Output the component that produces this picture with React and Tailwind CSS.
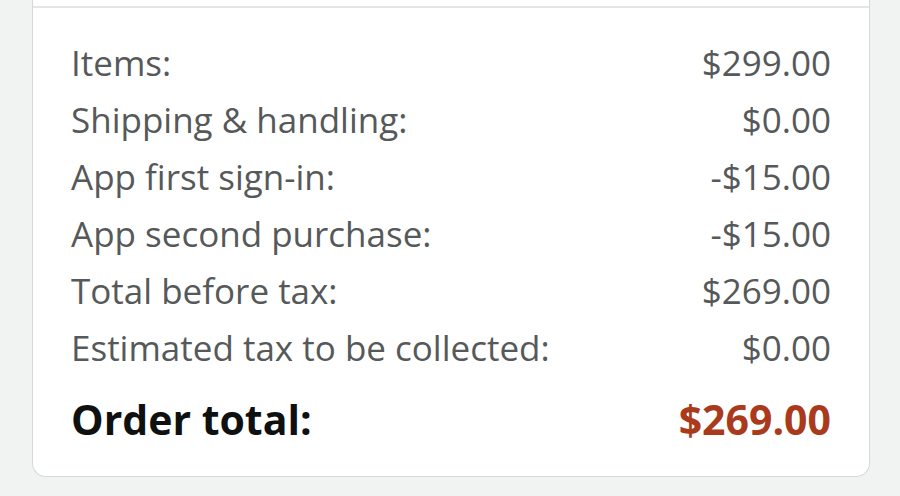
const rows = [
  ["Items:", "$299.00"],
  ["Shipping & handling:", "$0.00"],
  ["App first sign-in:", "-$15.00"],
  ["App second purchase:", "-$15.00"],
  ["Total before tax:", "$269.00"],
  ["Estimated tax to be collected:", "$0.00"],
];

export default function App() {
  return (
    <div
      className="w-[900px] h-[496px] bg-[#f1f2f2] pl-[32px] overflow-hidden"
      style={{ fontFamily: '"Open Sans", "Noto Sans", sans-serif' }}
    >
      <div className="w-[838px] bg-white border-x border-b border-[#d5d9d9] rounded-b-[14px]">
        <div className="h-[8px] border-b-2 border-[#e3e6e6]"></div>
        <div className="px-[38px] pt-[26px] pb-[28px]">
          {rows.map(([label, value]) => (
            <div
              key={label}
              className="flex justify-between text-[35px] leading-[57px] text-[#565959]"
            >
              <span>{label}</span>
              <span>{value}</span>
            </div>
          ))}
          <div className="flex justify-between mt-[15px] text-[41px] leading-[57px] font-bold">
            <span className="text-[#0f1111]">Order total:</span>
            <span className="text-[#a93a1c]">$269.00</span>
          </div>
        </div>
      </div>
    </div>
  );
}
